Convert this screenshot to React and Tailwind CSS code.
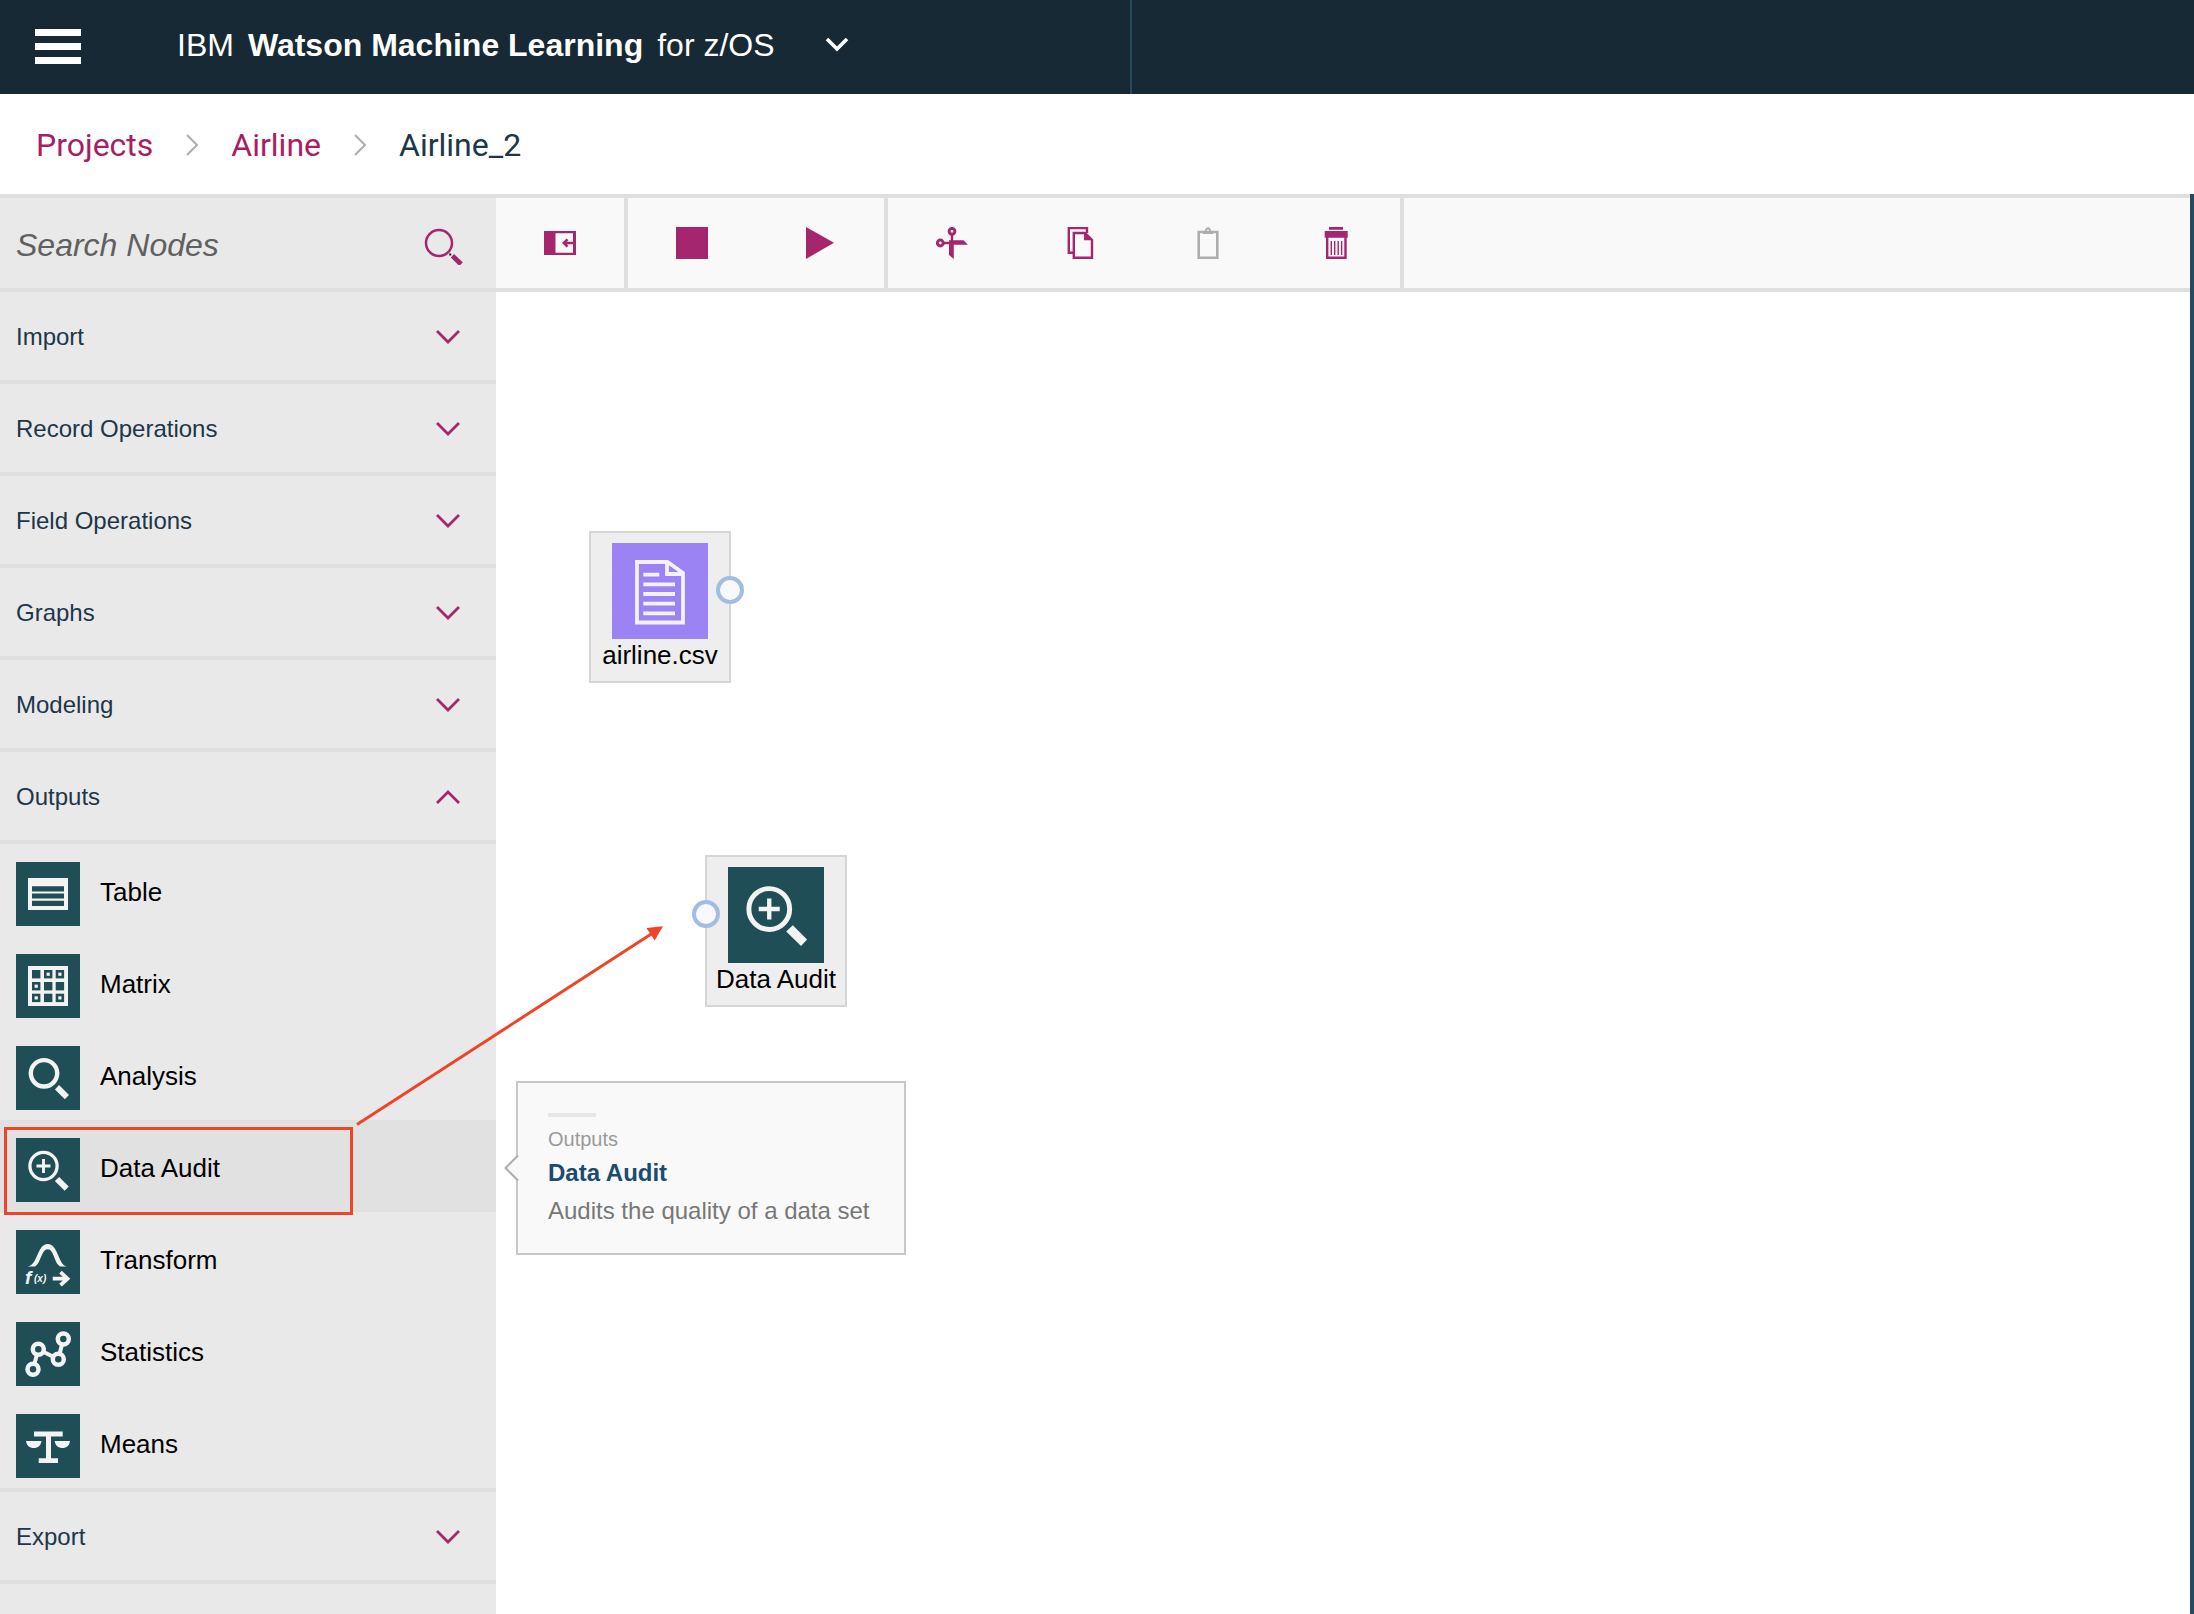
import React from 'react';

const MAGENTA = '#a5266d';
const TEAL = '#1f4e56';

function Tile({ children, className = 'size-16' }) {
  return (
    <svg viewBox="0 0 64 64" className={`${className} shrink-0`} aria-hidden="true">
      <rect width="64" height="64" fill={TEAL} />
      {children}
    </svg>
  );
}

function TableIcon() {
  return (
    <Tile>
      <path fill="#f3f3f3" d="M12 16h40v32H12z" />
      <path fill={TEAL} d="M16 24.2h32v5.200H16zM16 31.400h32v5.200H16zM16 38.800h32v5.200H16z" />
    </Tile>
  );
}

function MatrixIcon() {
  const stops = [16, 28, 39.7];
  const dotted = ['1-0', '2-0', '0-1', '0-2', '2-2'];
  return (
    <Tile>
      <path fill="#f3f3f3" d="M12 12h40v40H12z" />
      {stops.map((y, r) =>
        stops.map((x, c) => (
          <g key={`${c}-${r}`}>
            <rect x={x} y={y} width="8.4" height="8.4" fill={TEAL} />
            {dotted.includes(`${c}-${r}`) && (
              <rect x={x + 2.6} y={y + 2.6} width="3.2" height="3.2" fill="#f3f3f3" />
            )}
          </g>
        ))
      )}
    </Tile>
  );
}

function AnalysisIcon() {
  return (
    <Tile>
      <circle cx="28" cy="27.3" r="13.2" fill="none" stroke="#f3f3f3" strokeWidth="4.4" />
      <path fill="#f3f3f3" d="M43 39l10 9.900-4.200 4.400-9.800-9.700z" />
    </Tile>
  );
}

function AuditIcon({ className }) {
  return (
    <Tile className={className}>
      <circle cx="27.5" cy="28" r="13.6" fill="none" stroke="#f3f3f3" strokeWidth="3.3" />
      <path d="M20.5 28h14M27.5 21v14" stroke="#f3f3f3" strokeWidth="2.9" />
      <path fill="#f3f3f3" d="M43.200 38.900l9.500 9.500-4 4.300-9.900-9.700z" />
    </Tile>
  );
}

function TransformIcon() {
  return (
    <Tile>
      <path
        fill="#f3f3f3"
        d="M11.5 36.6C22 35 21 14 31.7 14S42 35 51 36.6h-6.7C38 33 38 19.2 31.7 19.2S25 33 19 36.6z"
      />
      <text x="9" y="54" fontFamily="Liberation Sans, sans-serif" fontStyle="italic" fontWeight="700" fontSize="19" fill="#f3f3f3">f</text>
      <text x="18" y="52" fontFamily="Liberation Sans, sans-serif" fontStyle="italic" fontWeight="700" fontSize="10" fill="#f3f3f3">(x)</text>
      <path d="M36.7 48.700H51M44.500 42.200l7 6.500-7 6.500" fill="none" stroke="#f3f3f3" strokeWidth="3.8" />
    </Tile>
  );
}

function StatisticsIcon() {
  return (
    <Tile>
      <path d="M17 47.3l5.300-20 20 10 5-20.300" fill="none" stroke="#f3f3f3" strokeWidth="4" />
      {[[17, 47.3], [22.3, 27.3], [42.3, 37.3], [47.3, 17]].map(([x, y]) => (
        <circle key={x} cx={x} cy={y} r="5.5" fill={TEAL} stroke="#f3f3f3" strokeWidth="4.5" />
      ))}
    </Tile>
  );
}

function MeansIcon() {
  return (
    <Tile>
      <path
        fill="#f3f3f3"
        d="M18 17.5h28.7v5H35v21.700h7V49H22.700v-4.800H30V22.500H18zM10 27h15.500C25 31.500 22 34 17.800 34S10.500 31.500 10 27zM38.700 27H54c-.5 4.500-3.400 7-7.500 7s-7.300-2.500-7.800-7z"
      />
    </Tile>
  );
}

function FileIcon() {
  return (
    <svg viewBox="0 0 96 96" className="size-24 shrink-0" aria-hidden="true">
      <rect width="96" height="96" fill="#9b83f3" />
      <g fill="none" stroke="#f3f1fa" strokeWidth="3.8">
        <path d="M25 19h30.500L71 30v49.500H25z" />
        <path d="M55 19v12h16" />
        <path d="M31.3 31.700h16M31.300 41.300H63M31.300 51H63M31.300 60.700H63M31.300 70.300H63" />
      </g>
    </svg>
  );
}

function Chevron({ up }) {
  return (
    <svg viewBox="0 0 24 14" className="h-3.5 w-6" fill="none" stroke={MAGENTA} strokeWidth="2.8" aria-hidden="true">
      {up ? <path d="M1 13L12 2l11 11" /> : <path d="M1 1l11 11L23 1" />}
    </svg>
  );
}

function CrumbArrow() {
  return (
    <svg viewBox="0 0 12 22" className="h-[22px] w-3" fill="none" stroke="#adadad" strokeWidth="2" aria-hidden="true">
      <path d="M1 1l10 10L1 21" />
    </svg>
  );
}

function ToolButton({ label, disabled, children }) {
  return (
    <button type="button" aria-label={label} disabled={disabled} className="flex w-32 items-center justify-center">
      <svg viewBox="0 0 32 32" className="size-8" fill={MAGENTA} aria-hidden="true">
        {children}
      </svg>
    </button>
  );
}

function Toolbar() {
  return (
    <div className="flex h-[94px] border-b-4 border-[#dfdfdf] bg-[#f9f9f9]">
      <div className="flex border-r-4 border-[#dfdfdf]">
        <ToolButton label="Toggle palette">
          <path fillRule="evenodd" d="M0 4h32v24H0zM11.5 6.300v19.400h17.500V6.300z" />
          <path d="M29 16H20M23.500 12.300L19.800 16l3.700 3.700" fill="none" stroke={MAGENTA} strokeWidth="2.5" />
        </ToolButton>
      </div>
      <div className="flex border-r-4 border-[#dfdfdf]">
        <ToolButton label="Stop">
          <path d="M0 0h32v32H0z" />
        </ToolButton>
        <ToolButton label="Run">
          <path d="M2 0l28 15.700L2 32z" />
        </ToolButton>
      </div>
      <div className="flex border-r-4 border-[#dfdfdf]">
        <ToolButton label="Cut">
          <circle cx="16" cy="4.3" r="2.9" fill="none" stroke={MAGENTA} strokeWidth="3" />
          <circle cx="4.3" cy="16" r="2.9" fill="none" stroke={MAGENTA} strokeWidth="3" />
          <path d="M14.800 8h2.400v6h-2.400zM8 14.800h6v2.400H8z" />
          <path d="M13 13.300h14.500l4.500 4.500H17.800V32L13 28z" />
        </ToolButton>
        <ToolButton label="Copy">
          <path d="M23 6V1H4.800v24.800H9" fill="none" stroke={MAGENTA} strokeWidth="2.4" />
          <path d="M9.800 6H21l7 7v17.800H9.800z" fill="none" stroke={MAGENTA} strokeWidth="2.4" />
          <path d="M20 5l9.200 8.300H20z" />
        </ToolButton>
        <ToolButton label="Paste" disabled>
          <path d="M6.700 5h18.600v25.800H6.700z" fill="none" stroke="#adadad" strokeWidth="2.6" />
          <path fill="#adadad" fillRule="evenodd" d="M11 7V4.500l2-.7C13.300 1.500 14.300.2 16 .2s2.700 1.300 3 3.600l2 .7V7zM16 2.500A1.300 1.300 0 0 0 16 5.100A1.300 1.300 0 0 0 16 2.500z" />
        </ToolButton>
        <ToolButton label="Delete">
          <path d="M9 0h14v2.800H9zM4.700 4h23v6.800h-23z" />
          <path d="M7.200 10v20.800h18.300V10" fill="none" stroke={MAGENTA} strokeWidth="2.4" />
          <path d="M11.300 14v14M14.700 14v14M18.200 14v14M21.600 14v14" stroke={MAGENTA} strokeWidth="1.4" />
        </ToolButton>
      </div>
    </div>
  );
}

function Category({ name, open }) {
  return (
    <button
      type="button"
      aria-expanded={!!open}
      className="flex h-[92px] w-full items-center justify-between border-b-4 border-[#dfdfdf] pl-4 pr-9 pt-0.5 text-2xl text-[#1d3649]"
    >
      {name}
      <Chevron up={open} />
    </button>
  );
}

function Tooltip() {
  return (
    <div
      role="tooltip"
      className="absolute -top-[39px] left-full z-10 ml-5 flex h-[174px] w-[390px] flex-col border-2 border-[#c8c8c8] bg-[#f9f9f9] px-[30px] pt-[30px]"
    >
      <svg viewBox="0 0 16 28" className="absolute -left-3.5 top-[71px] h-7 w-4" aria-hidden="true">
        <path d="M14 2L2 14l12 12z" fill="#f9f9f9" />
        <path d="M14 1.500L1.500 14 14 26.500" fill="none" stroke="#adadad" strokeWidth="2" />
      </svg>
      <div className="h-1 w-12 bg-[#e7e7e7]" />
      <p className="mt-2 text-xl leading-7 text-[#999999]">Outputs</p>
      <p className="text-2xl font-bold leading-10 text-[#1b4b70]">Data Audit</p>
      <p className="whitespace-nowrap text-2xl leading-9 text-[#777777]">Audits the quality of a data set</p>
    </div>
  );
}

const OUTPUTS = [
  ['Table', TableIcon],
  ['Matrix', MatrixIcon],
  ['Analysis', AnalysisIcon],
  ['Data Audit', AuditIcon],
  ['Transform', TransformIcon],
  ['Statistics', StatisticsIcon],
  ['Means', MeansIcon],
];

function Sidebar() {
  return (
    <aside className="w-[496px] shrink-0 bg-[#e9e9e9]">
      <div className="flex h-[94px] items-center justify-between border-b-4 border-[#dfdfdf] pl-4 pr-8 pt-1">
        <input
          type="search"
          aria-label="Search Nodes"
          placeholder="Search Nodes"
          className="w-80 bg-transparent text-[32px] italic leading-10 outline-none placeholder:text-[#606060]"
        />
        <button type="button" aria-label="Search">
          <svg viewBox="0 0 40 40" className="size-10" aria-hidden="true">
            <circle cx="15" cy="18" r="13" fill="none" stroke={MAGENTA} strokeWidth="2.5" />
            <path d="M25.200 28.500h2v2h-2z" fill="#111" />
            <path d="M30 29l8.800 8.300-3.500 3.700-8.500-8.500z" fill={MAGENTA} />
          </svg>
        </button>
      </div>
      {['Import', 'Record Operations', 'Field Operations', 'Graphs', 'Modeling'].map((n) => (
        <Category key={n} name={n} />
      ))}
      <Category name="Outputs" open />
      <ul className="border-b-4 border-[#dfdfdf]">
        {OUTPUTS.map(([name, Icon]) => {
          const active = name === 'Data Audit';
          return (
            <li key={name} className={active ? 'relative h-[92px] bg-[#e1e1e1]' : 'h-[92px]'}>
              <button type="button" className="flex h-full w-full items-start gap-5 pl-4 pt-[18px] text-left text-[26px] leading-[60px] text-black">
                <Icon />
                {name}
              </button>
              {active && <div className="pointer-events-none absolute left-1 top-[7px] h-[88px] w-[349px] border-3 border-[#ee4427]" />}
              {active && <Tooltip />}
            </li>
          );
        })}
      </ul>
      <Category name="Export" />
    </aside>
  );
}

function FlowNode({ label, icon, place, port }) {
  return (
    <div className={`absolute ${place} flex h-[152px] w-[142px] flex-col items-center border-2 border-[#d6d6d6] bg-[#eeeeee] pt-2.5`}>
      {icon}
      <span className="whitespace-nowrap text-[26px] leading-8 text-black">{label}</span>
      <span className={`absolute top-[43px] size-7 rounded-full border-4 border-[#a3bde2] bg-[#f8f9fd] ${port}`} />
    </div>
  );
}

export default function App() {
  return (
    <div className="flex min-h-screen flex-col bg-white font-['Liberation_Sans',Arial,sans-serif]">
      <header className="flex h-[94px] bg-[#162934] text-white">
        <div className="flex w-[1132px] items-center border-r-2 border-[#28485c] pl-[35px]">
          <button type="button" aria-label="Menu" className="flex w-[46px] flex-col gap-[7px] pb-0.5">
            <span className="h-[7px] bg-white" />
            <span className="h-[7px] bg-white" />
            <span className="h-[7px] bg-white" />
          </button>
          <button type="button" className="ml-24 flex items-center pb-1 text-[32px] leading-10">
            <span>IBM</span>
            <strong className="ml-3.5 font-bold">Watson Machine Learning</strong>
            <span className="ml-3.5">for z/OS</span>
            <svg viewBox="0 0 24 14" className="ml-[50px] h-3.5 w-6" fill="none" stroke="#fff" strokeWidth="3.6" aria-hidden="true">
              <path d="M2 1l10 10L22 1" />
            </svg>
          </button>
        </div>
      </header>

      <nav aria-label="Breadcrumb" className="flex h-[100px] items-center gap-[33px] pl-9 pt-0.5 font-['Roboto','Open_Sans',sans-serif] text-[32px] leading-10">
        <a href="#projects" className="text-[#a91d63]">Projects</a>
        <CrumbArrow />
        <a href="#airline" className="text-[#a91d63]">Airline</a>
        <CrumbArrow />
        <span className="text-[#1d3649]">Airline_2</span>
      </nav>

      <div className="flex grow border-r-4 border-[#264a60]">
        <div className="relative flex grow border-t-4 border-[#dfdfdf]">
          <Sidebar />
          <main className="flex min-w-0 grow flex-col">
            <Toolbar />
            <div className="relative grow">
              <FlowNode label="airline.csv" icon={<FileIcon />} place="left-[93px] top-[239px]" port="-right-[15px]" />
              <FlowNode label="Data Audit" icon={<AuditIcon className="size-24" />} place="left-[209px] top-[563px]" port="-left-[15px]" />
              <svg viewBox="0 0 310 202" className="pointer-events-none absolute -left-[141px] top-[632px] h-[202px] w-[310px]" aria-hidden="true">
                <path d="M2 200.500L297 9.500" stroke="#ee4427" strokeWidth="3" />
                <path d="M308 2.300l-8.300 14.200L291.500 4z" fill="#ee4427" />
              </svg>
            </div>
          </main>
        </div>
      </div>
    </div>
  );
}
